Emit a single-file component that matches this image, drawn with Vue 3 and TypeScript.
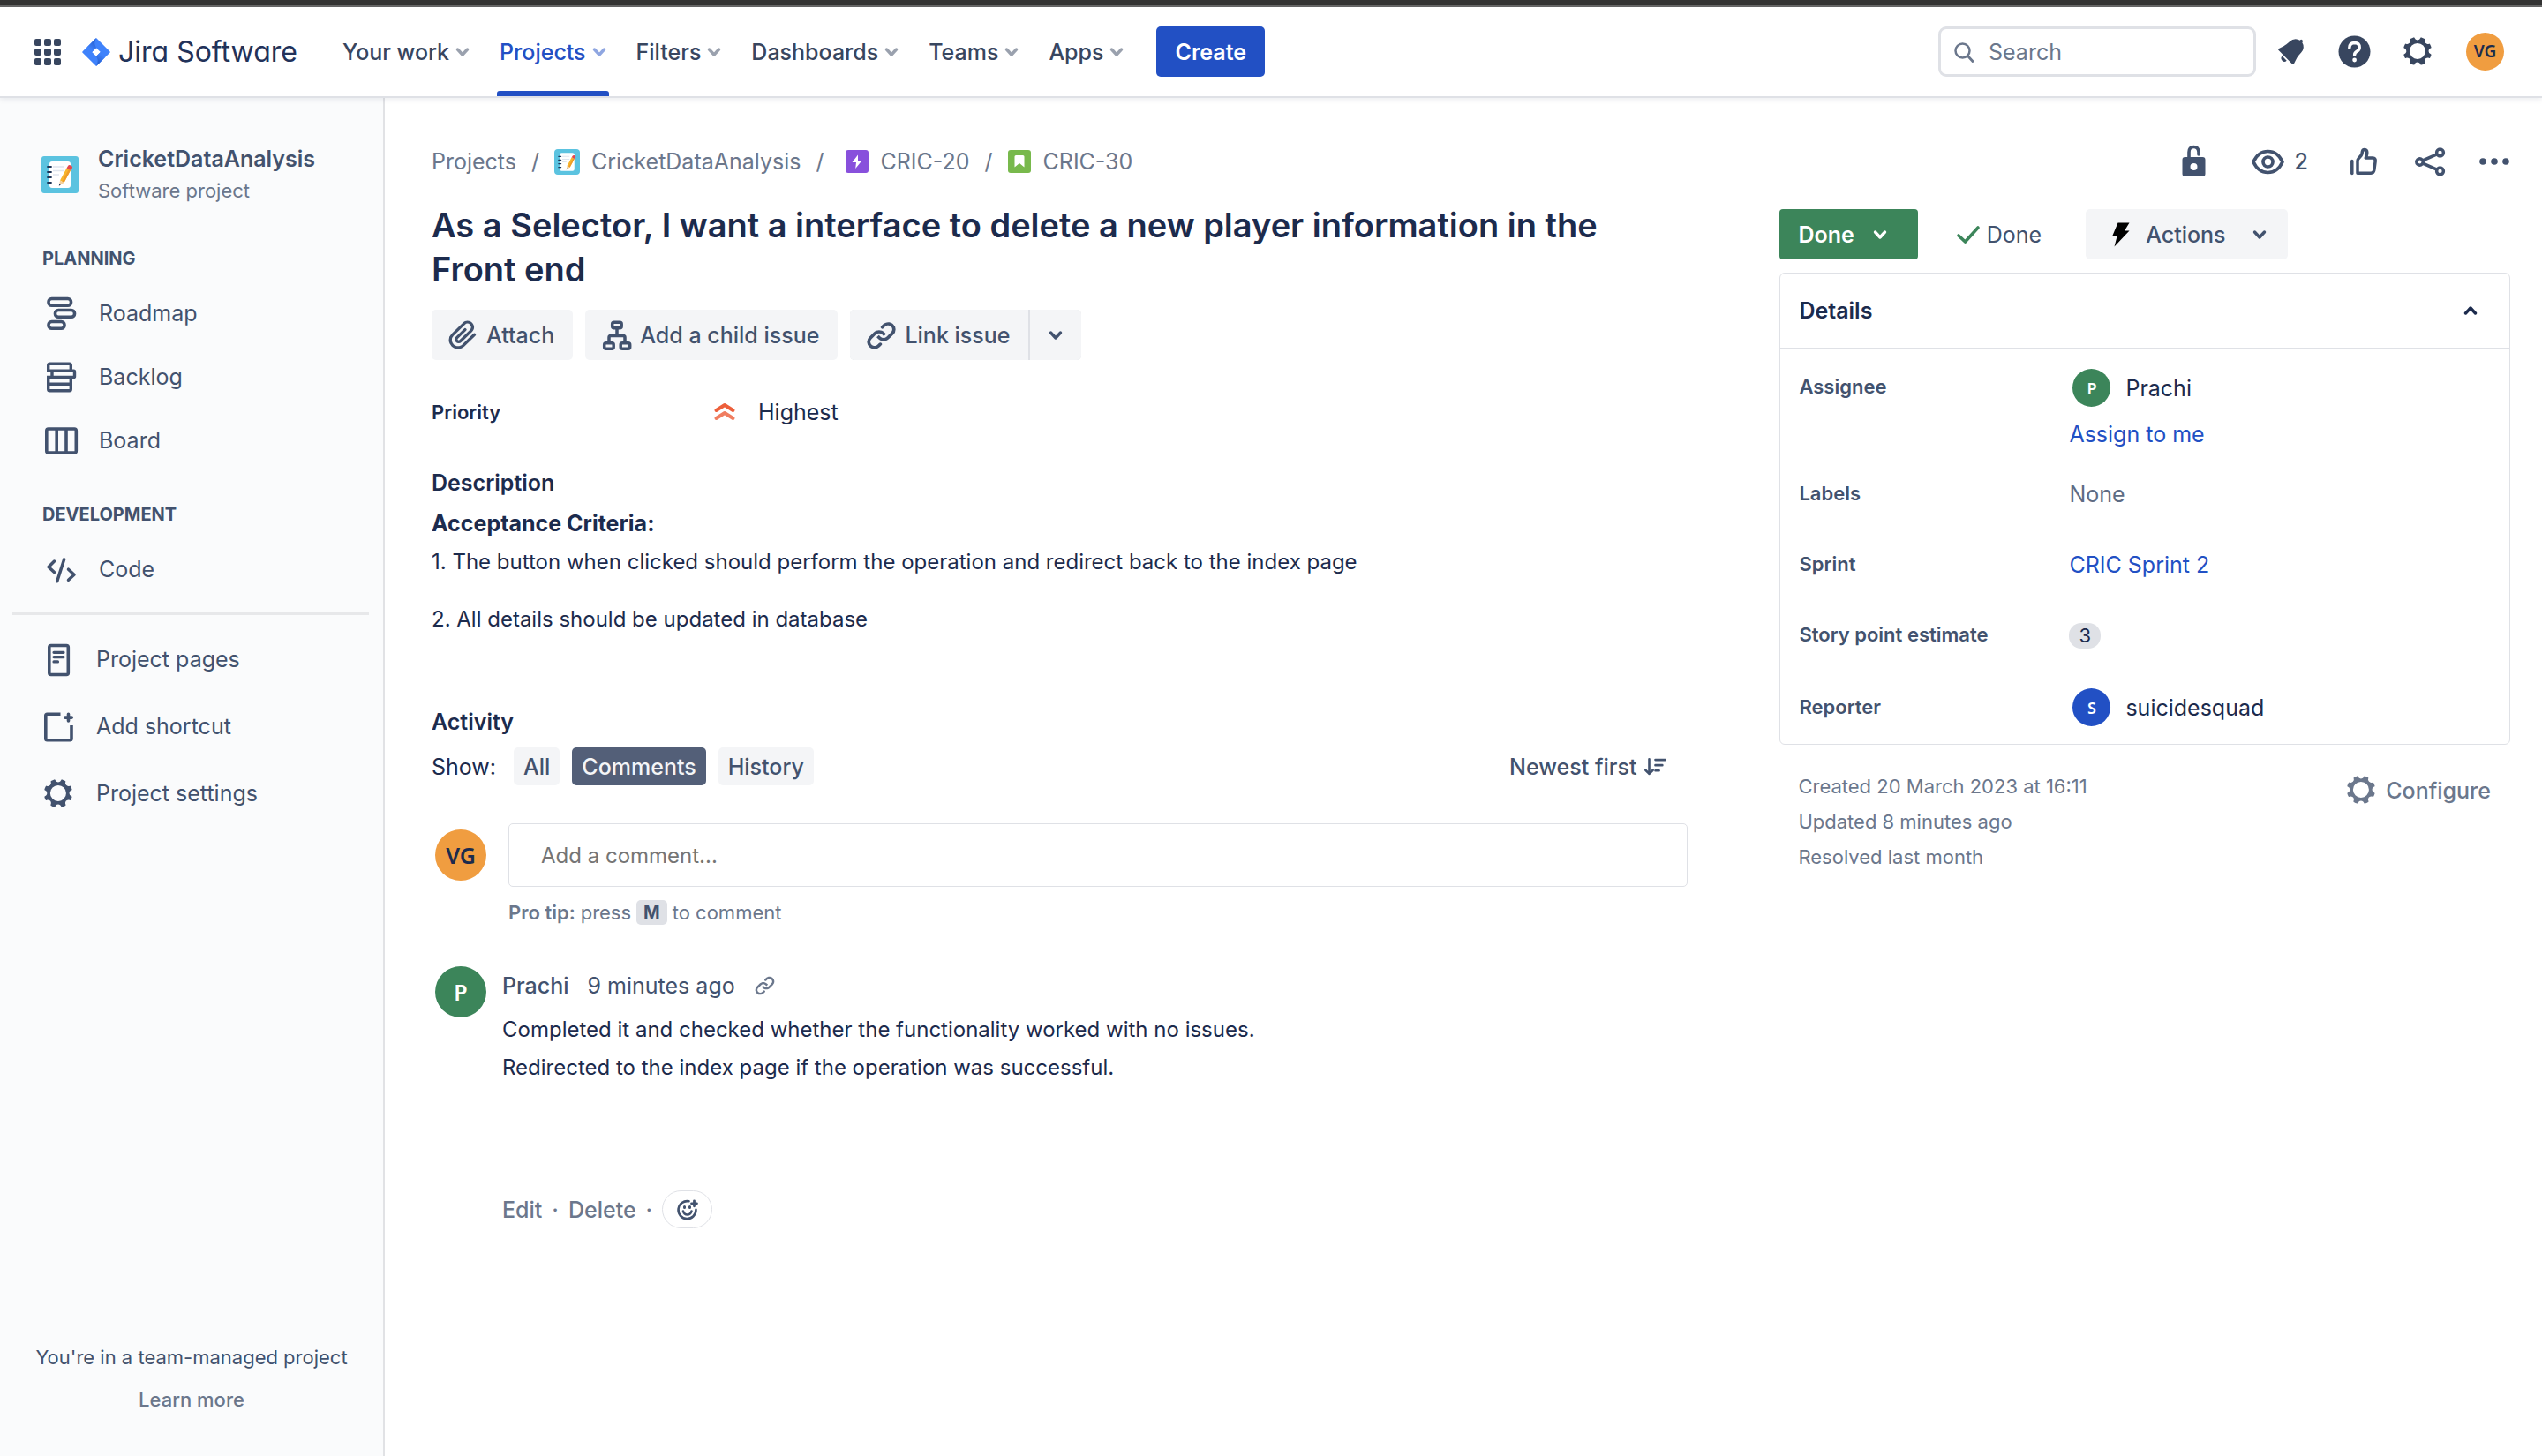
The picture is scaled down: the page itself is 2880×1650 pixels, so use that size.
<script setup lang="ts">
import { ref } from 'vue'

interface NavItem {
  label: string
  active?: boolean
}

const navItems: NavItem[] = [
  { label: 'Your work' },
  { label: 'Projects', active: true },
  { label: 'Filters' },
  { label: 'Dashboards' },
  { label: 'Teams' },
  { label: 'Apps' },
]

const planning = [
  { label: 'Roadmap', icon: 'i-roadmap' },
  { label: 'Backlog', icon: 'i-backlog' },
  { label: 'Board', icon: 'i-board' },
]

const shortcuts = [
  { label: 'Project pages', icon: 'i-pages' },
  { label: 'Add shortcut', icon: 'i-shortcut' },
  { label: 'Project settings', icon: 'i-gear' },
]

const filters = ['All', 'Comments', 'History']
const activeFilter = ref('Comments')

const search = ref('')
const comment = ref('')
</script>

<template>
  <div class="page">
    <!-- Shared icon shapes -->
    <svg class="sprite" aria-hidden="true">
      <symbol id="i-chevron" viewBox="0 0 16 16">
        <path d="M2.5 5 8 11l5.500-6" fill="none" stroke="currentColor" stroke-width="3.400" stroke-linecap="round" stroke-linejoin="round" />
      </symbol>
      <symbol id="i-gear" viewBox="0 0 24 24">
        <path fill="currentColor" fill-rule="evenodd" d="M11.701 16.7a5.002 5.002 0 110-10.003 5.002 5.002 0 010 10.004m8.368-3.117a1.995 1.995 0 01-1.346-1.885c0-.876.563-1.613 1.345-1.885a.48.48 0 00.315-.574 8.947 8.947 0 00-.836-1.993.477.477 0 00-.598-.195 2.04 2.04 0 01-1.29.08 1.988 1.988 0 01-1.404-1.395 2.04 2.04 0 01.076-1.297.478.478 0 00-.196-.597 8.98 8.98 0 00-1.975-.826.479.479 0 00-.574.314 1.995 1.995 0 01-1.885 1.346 1.994 1.994 0 01-1.884-1.345.482.482 0 00-.575-.315c-.708.2-1.379.485-2.004.842a.47.47 0 00-.198.582A2.002 2.002 0 014.445 7.06a.478.478 0 00-.595.196 8.946 8.946 0 00-.833 1.994.48.48 0 00.308.572 1.995 1.995 0 011.323 1.877c0 .867-.552 1.599-1.324 1.877a.479.479 0 00-.308.57 8.99 8.99 0 00.723 1.79.477.477 0 00.624.194c.595-.273 1.343-.264 2.104.238.117.077.225.185.302.3.527.8.512 1.58.198 2.188a.473.473 0 00.168.628 8.946 8.946 0 002.11.897.474.474 0 00.57-.313 1.995 1.995 0 011.886-1.353c.878 0 1.618.567 1.887 1.353a.475.475 0 00.57.313 8.964 8.964 0 002.084-.883.473.473 0 00.167-.631c-.318-.608-.337-1.393.191-2.195.077-.116.185-.225.302-.302.772-.511 1.527-.513 2.125-.23a.477.477 0 00.628-.19 8.925 8.925 0 00.728-1.793.478.478 0 00-.314-.573" />
      </symbol>
      <symbol id="i-link" viewBox="0 0 24 24">
        <path fill="currentColor" d="M12.856 5.457l-.937.92a1.002 1.002 0 000 1.437 1.047 1.047 0 001.463 0l.984-.966c.967-.95 2.542-1.135 3.602-.288a2.54 2.54 0 01.203 3.81l-2.903 2.852a2.646 2.646 0 01-3.696 0l-1.11-1.09L9 13.57l1.108 1.089c1.822 1.788 4.802 1.788 6.622 0l2.905-2.852a4.558 4.558 0 00-.357-6.82c-1.893-1.517-4.695-1.226-6.422.47M11.144 19.543l.937-.92a1.002 1.002 0 000-1.437 1.047 1.047 0 00-1.462 0l-.985.966c-.967.95-2.542 1.135-3.602.288a2.54 2.54 0 01-.203-3.81l2.903-2.852a2.646 2.646 0 013.696 0l1.11 1.09L15 11.43l-1.108-1.089c-1.822-1.788-4.802-1.788-6.622 0l-2.905 2.852a4.558 4.558 0 00.357 6.82c1.893 1.517 4.695 1.226 6.422-.47" />
      </symbol>
      <symbol id="i-notepad" viewBox="0 0 42 42">
        <rect width="42" height="42" rx="3" fill="#5bc3e0" />
        <rect x="9" y="6" width="24" height="30" rx="3" fill="#fff" />
        <path d="M7 12h4M7 18h4M7 24h4M7 30h4" stroke="#1d3557" stroke-width="1.800" stroke-linecap="round" />
        <path d="M13 12h12M13 16.500h12M13 21h7" stroke="#dfe5ee" stroke-width="1.500" />
        <path d="M28.500 13.500 33 16l-7.500 14-4.500-2.500z" fill="#f7b52c" />
        <path d="M31 14.700 33 16l-7.500 14-2-1.200z" fill="#ef9b28" />
        <path d="m21 27.500 4.500 2.500-5.500 3.500z" fill="#f4cf9b" />
        <path d="m20.300 31 1.400 1.400-1.900 1.300z" fill="#1d3557" />
        <path d="m28.500 13.500 1.700-2.700q1-1.300 2.500-.500l1.500.900q1.400 1 .700 2.300L33 16z" fill="#e5484d" />
      </symbol>
      <symbol id="i-roadmap" viewBox="0 0 43 43">
        <g fill="none" stroke="currentColor" stroke-width="3.600">
          <rect x="7" y="4.500" width="25.500" height="7.800" rx="3.600" />
          <rect x="14.500" y="17.500" width="22" height="7.800" rx="3.600" />
          <rect x="7" y="30.500" width="18" height="7.800" rx="3.600" />
        </g>
      </symbol>
      <symbol id="i-backlog" viewBox="0 0 43 43">
        <g fill="none" stroke="currentColor" stroke-width="3.400" stroke-linejoin="round">
          <path d="M6.700 15V8q0-1.800 1.800-1.800h22q1.800 0 1.800 1.800v6" />
          <path d="M5 14.300h30.500q1 0 1 1v5.200q0 1-1 1H5M11 14v7" />
          <path d="M6.700 21v14q0 1.800 1.800 1.800h22q1.800 0 1.800-1.800V21M6.700 29.200h25.500" />
        </g>
      </symbol>
      <symbol id="i-board" viewBox="0 0 43 43">
        <g fill="none" stroke="currentColor" stroke-width="3.600">
          <rect x="4.800" y="8" width="33.500" height="27" rx="2" />
          <path d="M16.200 8v27M27 8v27" />
        </g>
      </symbol>
      <symbol id="i-code" viewBox="0 0 43 43">
        <path d="m13.500 12-6.500 6.500 6.500 6M29.500 21.200l6.500 6-6.500 6M24.700 9.800l-8 25" fill="none" stroke="currentColor" stroke-width="3.500" stroke-linecap="round" stroke-linejoin="round" />
      </symbol>
      <symbol id="i-pages" viewBox="0 0 43 43">
        <rect x="10.800" y="5.500" width="21.500" height="33" rx="2" fill="none" stroke="currentColor" stroke-width="3.600" />
        <path d="M16 13.300h11M16 18.600h11M16 23.900h4.500" stroke="currentColor" stroke-width="3.200" stroke-linecap="round" />
      </symbol>
      <symbol id="i-shortcut" viewBox="0 0 43 43">
        <path d="M23.500 7.300H8.500q-1.700 0-1.700 1.700v26q0 1.700 1.700 1.700h25.800q1.700 0 1.700-1.700V20" fill="none" stroke="currentColor" stroke-width="3.600" />
        <path d="M32.500 7.300v7.600M28.700 11.100h7.600" stroke="currentColor" stroke-width="3.600" stroke-linecap="round" />
      </symbol>
    </svg>

    <div class="window-edge"></div>

    <header class="topbar">
      <button class="switcher" type="button" aria-label="App switcher">
        <svg viewBox="0 0 30 30" width="30" height="30" fill="currentColor">
          <rect x="0" y="0" width="8" height="8" rx="2" /><rect x="11" y="0" width="8" height="8" rx="2" /><rect x="22" y="0" width="8" height="8" rx="2" />
          <rect x="0" y="11" width="8" height="8" rx="2" /><rect x="11" y="11" width="8" height="8" rx="2" /><rect x="22" y="11" width="8" height="8" rx="2" />
          <rect x="0" y="22" width="8" height="8" rx="2" /><rect x="11" y="22" width="8" height="8" rx="2" /><rect x="22" y="22" width="8" height="8" rx="2" />
        </svg>
      </button>
      <a class="brand" href="#">
        <svg viewBox="0 0 32 32" width="32" height="32">
          <defs>
            <linearGradient id="jg1" x1="16" y1="3" x2="9" y2="12" gradientUnits="userSpaceOnUse"><stop offset="0" stop-color="#2259c9" /><stop offset="1" stop-color="#3f82fb" /></linearGradient>
            <linearGradient id="jg2" x1="16" y1="29" x2="23" y2="20" gradientUnits="userSpaceOnUse"><stop offset="0" stop-color="#2259c9" /><stop offset="1" stop-color="#3f82fb" /></linearGradient>
          </defs>
          <path fill="#3f82fb" fill-rule="evenodd" d="M16 0 31.400 15.200q.8.800 0 1.600L16 32 .6 16.800q-.8-.8 0-1.600zm0 11.200L11.200 16l4.800 4.800 4.800-4.800z" />
          <path fill="url(#jg1)" d="M16 0v0q-3.500 5.500 0 11.200L11.200 16 6 10z" />
          <path fill="url(#jg2)" d="M16 32q3.500-5.500 0-11.200l4.800-4.800 5.200 6z" />
        </svg>
        <span>Jira Software</span>
      </a>

      <nav class="nav">
        <button v-for="item in navItems" :key="item.label" type="button" class="nav-item" :class="{ active: item.active }">
          {{ item.label }}
          <svg class="chev"><use href="#i-chevron" /></svg>
        </button>
      </nav>
      <button class="create" type="button">Create</button>

      <div class="tools">
        <label class="search">
          <svg viewBox="0 0 24 24" width="24" height="24"><circle cx="10.500" cy="10.500" r="8" fill="none" stroke="currentColor" stroke-width="2.500" /><path d="m16.500 16.500 5.500 6" stroke="currentColor" stroke-width="2.800" stroke-linecap="round" /></svg>
          <input v-model="search" type="text" placeholder="Search" aria-label="Search" />
        </label>
        <button class="icon-btn" type="button" aria-label="Notifications">
          <svg viewBox="0 0 24 24" width="43" height="43"><path fill="currentColor" d="M6.485 17.669a2 2 0 002.829 0l-2.829-2.83a2 2 0 000 2.83zm4.897-12.191l-.725.725c-.782.782-2.21 1.813-3.206 2.311l-3.017 1.509c-.495.248-.584.774-.187 1.171l8.556 8.556c.398.396.922.313 1.171-.188l1.51-3.016c.494-.988 1.526-2.42 2.311-3.206l.725-.726a5.048 5.048 0 00.64-6.356 1.01 1.01 0 10-1.354-1.494c-.023.025-.046.049-.066.075a5.043 5.043 0 00-2.788-.84 5.036 5.036 0 00-3.57 1.478z" /></svg>
        </button>
        <button class="icon-btn" type="button" aria-label="Help">
          <svg viewBox="0 0 43 43" width="43" height="43"><circle cx="21.500" cy="21.500" r="18" fill="currentColor" /><path d="M15.800 17.200q.2-5.700 5.900-5.700 5.500.2 5.500 5.200 0 2.700-2.700 4.400-2.900 1.700-2.900 4.200" fill="none" stroke="#fff" stroke-width="3.500" stroke-linecap="round" /><circle cx="21.600" cy="31" r="2.400" fill="#fff" /></svg>
        </button>
        <button class="icon-btn" type="button" aria-label="Settings">
          <svg width="43" height="43"><use href="#i-gear" /></svg>
        </button>
        <button class="avatar orange top-avatar" type="button" aria-label="Your profile">VG</button>
      </div>
    </header>

    <div class="body">
      <aside class="sidebar">
        <div class="project">
          <svg width="42" height="42"><use href="#i-notepad" /></svg>
          <div>
            <div class="project-name">CricketDataAnalysis</div>
            <div class="project-type">Software project</div>
          </div>
        </div>
        <h2 class="group">PLANNING</h2>
        <a v-for="item in planning" :key="item.label" class="side-link" href="#">
          <svg width="43" height="43"><use :href="'#' + item.icon" /></svg>{{ item.label }}
        </a>
        <h2 class="group second">DEVELOPMENT</h2>
        <a class="side-link" href="#"><svg width="43" height="43"><use href="#i-code" /></svg>Code</a>
        <hr class="divider" />
        <a v-for="item in shortcuts" :key="item.label" class="side-link low" href="#">
          <svg width="43" height="43"><use :href="'#' + item.icon" /></svg>{{ item.label }}
        </a>
        <div class="side-foot">
          <p>You're in a team-managed project</p>
          <a href="#">Learn more</a>
        </div>
      </aside>

      <main class="content">
        <section class="issue">
          <nav class="crumbs" aria-label="Breadcrumb">
            <a href="#">Projects</a>
            <span class="slash">/</span>
            <a href="#"><svg class="crumb-project" width="29" height="29"><use href="#i-notepad" /></svg>CricketDataAnalysis</a>
            <span class="slash wide">/</span>
            <a class="typed" href="#">
              <svg viewBox="0 0 26 26" width="26" height="26"><rect width="26" height="26" rx="3" fill="#8850dc" /><path d="M14 5.500 7.500 14H12l-.800 7L18.500 12H14z" fill="#fff" /></svg>CRIC-20</a>
            <span class="slash">/</span>
            <a class="typed last" href="#">
              <svg viewBox="0 0 26 26" width="26" height="26"><rect width="26" height="26" rx="3" fill="#78b94c" /><path d="M7.500 19.500V7.500Q7.500 6 9 6h8q1.500 0 1.500 1.500v12L13 15z" fill="#fff" /></svg>CRIC-30</a>
          </nav>

          <h1 class="title">As a Selector, I want a interface to delete a new player information in the Front end</h1>

          <div class="quick">
            <button class="btn" type="button">
              <svg viewBox="0 0 24 24" width="43" height="43"><path fill="currentColor" d="M11.643 17.965c-1.53 1.495-4.016 1.496-5.542.004a3.773 3.773 0 01.002-5.412l7.147-6.985a2.316 2.316 0 013.233-.003c.893.873.895 2.282.004 3.154l-6.703 6.55a.653.653 0 01-.914-.008.62.62 0 01.001-.892l5.14-5.024a.9.9 0 000-1.294.952.952 0 00-1.325 0l-5.139 5.022a2.414 2.414 0 000 3.486 2.545 2.545 0 003.565.002l6.702-6.55c1.631-1.594 1.629-4.148-.004-5.744-1.632-1.596-4.255-1.594-5.883.003l-7.148 6.985a5.567 5.567 0 00-.002 7.996c2.258 2.207 5.928 2.206 8.192-.005l6.917-6.76a.9.9 0 000-1.294.953.953 0 00-1.325 0z" /></svg>
              Attach
            </button>
            <button class="btn" type="button">
              <svg viewBox="-2 -2 43 43" width="43" height="43" fill="none" stroke="currentColor" stroke-width="3.500"><rect x="14.700" y="5.200" width="10.500" height="6.500" rx="2" /><rect x="5.700" y="28.700" width="10.500" height="6.500" rx="2" /><rect x="24.200" y="28.700" width="10.500" height="6.500" rx="2" /><path d="M20 12v8.500M11 29v-6.500q0-2 2-2h14q2 0 2 2V29" /></svg>
              Add a child issue
            </button>
            <div class="split">
              <button class="btn" type="button"><svg width="43" height="43"><use href="#i-link" /></svg>Link issue</button>
              <button class="btn more" type="button" aria-label="More link options"><svg class="chev"><use href="#i-chevron" /></svg></button>
            </div>
          </div>

          <div class="priority">
            <span class="priority-label">Priority</span>
            <svg viewBox="0 0 26 26" width="26" height="26" fill="none" stroke-width="4" stroke-linecap="round" stroke-linejoin="round"><path d="m3.500 11 9.500-6 9.500 6" stroke="#ed5f3b" /><path d="m3.500 20 9.500-6 9.500 6" stroke="#f07d60" /></svg>
            <span>Highest</span>
          </div>

          <h2 class="heading">Description</h2>
          <div class="description">
            <p><strong>Acceptance Criteria:</strong></p>
            <p>1. The button when clicked should perform the operation and redirect back to the index page</p>
            <p class="spaced">2. All details should be updated in database</p>
          </div>

          <h2 class="heading activity">Activity</h2>
          <div class="activity-bar">
            <span>Show:</span>
            <div class="tabs">
              <button v-for="f in filters" :key="f" type="button" class="tab" :class="{ on: f === activeFilter }" @click="activeFilter = f">{{ f }}</button>
            </div>
            <button class="sort" type="button">
              Newest first
              <svg viewBox="0 0 28 28" width="26" height="26" fill="none" stroke="currentColor" stroke-width="2.800" stroke-linecap="round" stroke-linejoin="round"><path d="M7 4.500v18M2.500 18 7 22.500 11.500 18M14.500 5.500h12M14.500 12h8.500M14.500 18.500h4.500" /></svg>
            </button>
          </div>

          <div class="composer">
            <span class="avatar orange big">VG</span>
            <div class="composer-body">
              <input v-model="comment" type="text" placeholder="Add a comment..." aria-label="Add a comment" />
              <p class="tip"><b>Pro tip:</b><span>press</span><kbd>M</kbd><span>to comment</span></p>
            </div>
          </div>

          <article class="comment">
            <span class="avatar green big">P</span>
            <div>
              <div class="comment-head">
                <strong>Prachi</strong><span>9 minutes ago</span>
                <a href="#" aria-label="Copy link to comment"><svg width="29" height="29"><use href="#i-link" /></svg></a>
              </div>
              <div class="comment-text">
                <p>Completed it and checked whether the functionality worked with no issues.</p>
                <p>Redirected to the index page if the operation was successful.</p>
              </div>
              <div class="comment-actions">
                <button type="button">Edit</button><span>·</span><button type="button">Delete</button><span>·</span>
                <button class="react" type="button" aria-label="Add reaction">
                  <svg viewBox="0 0 26 26" width="26" height="26" fill="none" stroke="currentColor" stroke-width="2.600" stroke-linecap="round"><path d="M14.500 3.300a10 10 0 1 0 8 9.500" /><path d="M8 14.500q1 4 4.700 4t4.800-4" /><path d="M9.500 9.600v.800M15.500 9.600v.800" stroke-width="3" /><path d="M20.500 2.800v6M17.500 5.800h6" stroke-width="2.800" /></svg>
                </button>
              </div>
            </div>
          </article>
        </section>

        <aside class="meta">
          <div class="meta-tools">
            <button class="icon-btn" type="button" aria-label="Restrictions">
              <svg viewBox="0 0 43 43" width="43" height="43"><path d="M16 17V10.500q0-6 5.500-6 5 0 5.500 5.500v3" fill="none" stroke="currentColor" stroke-width="3.600" stroke-linecap="round" /><path fill="currentColor" fill-rule="evenodd" d="M11.500 16h20q3 0 3 3v16q0 3-3 3h-20q-3 0-3-3V19q0-3 3-3zm10 7a4 4 0 1 0 0 8 4 4 0 0 0 0-8z" /></svg>
            </button>
            <button class="icon-btn watch" type="button" aria-label="Watchers">
              <svg viewBox="0 0 43 43" width="43" height="43" fill="none" stroke="currentColor" stroke-width="3.700"><path d="M5 21.500q5.500-12 16.500-12T38 21.500q-5.500 12-16.500 12T5 21.500z" stroke-linejoin="round" /><circle cx="21.500" cy="21.500" r="5.500" /></svg>
              2
            </button>
            <button class="icon-btn" type="button" aria-label="Vote">
              <svg viewBox="0 0 43 43" width="43" height="43" fill="none" stroke="currentColor" stroke-width="3.500" stroke-linecap="round" stroke-linejoin="round"><path d="M8.800 20.500v14" /><path d="M15 34V20.500q0-1.500 1-2.700l3.200-3.800q.6-.8.800-2l.500-2.600q.5-2 2.500-2 2.800.2 2.800 3.500 0 2.500-1.500 6.100h8q3 .3 2.900 3.200L33.800 31q-.7 3.200-3.600 3.200H15" /></svg>
            </button>
            <button class="icon-btn" type="button" aria-label="Share">
              <svg viewBox="0 0 43 43" width="43" height="43" fill="none" stroke="currentColor" stroke-width="3.500"><circle cx="9.500" cy="21.500" r="3.700" /><circle cx="32.500" cy="11" r="3.900" /><circle cx="32.500" cy="32" r="3.900" /><path d="m13 19.800 15.900-7M13 23.200l15.900 7" /></svg>
            </button>
            <button class="icon-btn" type="button" aria-label="More">
              <svg viewBox="0 0 36 36" width="36" height="36" fill="currentColor"><circle cx="5" cy="18" r="3.800" /><circle cx="18" cy="18" r="3.800" /><circle cx="31" cy="18" r="3.800" /></svg>
            </button>
          </div>

          <div class="status-row">
            <button class="status" type="button">Done<svg class="chev"><use href="#i-chevron" /></svg></button>
            <span class="resolution">
              <svg viewBox="0 0 28 22" width="28" height="22"><path d="m3 12 7.500 7L25 3" fill="none" stroke="#3c855a" stroke-width="3.600" stroke-linecap="round" stroke-linejoin="round" /></svg>Done
            </span>
            <button class="btn automate" type="button">
              <svg viewBox="0 0 22 28" width="22" height="28"><path d="M7.500.5H20.500L15 9.500h5.500L3.500 27.500 6.500 16H1z" fill="#000" /></svg>
              Actions
              <svg class="chev"><use href="#i-chevron" /></svg>
            </button>
          </div>

          <section class="panel">
            <h2 class="panel-head">
              <span>Details</span>
              <button type="button" class="icon-btn" aria-label="Collapse details"><svg class="chev up"><use href="#i-chevron" /></svg></button>
            </h2>
            <dl>
              <div class="field assignee">
                <dt>Assignee</dt>
                <dd>
                  <div class="person"><span class="avatar green small">P</span>Prachi</div>
                  <a href="#">Assign to me</a>
                </dd>
              </div>
              <div class="field"><dt>Labels</dt><dd class="muted">None</dd></div>
              <div class="field"><dt>Sprint</dt><dd><a href="#">CRIC Sprint 2</a></dd></div>
              <div class="field"><dt>Story point estimate</dt><dd><span class="badge">3</span></dd></div>
              <div class="field"><dt>Reporter</dt><dd><div class="person"><span class="avatar blue small">S</span>suicidesquad</div></dd></div>
            </dl>
          </section>

          <div class="dates">
            <div>
              <p>Created 20 March 2023 at 16:11</p>
              <p>Updated 8 minutes ago</p>
              <p>Resolved last month</p>
            </div>
            <button class="configure" type="button"><svg width="43" height="43"><use href="#i-gear" /></svg>Configure</button>
          </div>
        </aside>
      </main>
    </div>
  </div>
</template>

<style>
body {
  margin: 0;
  background: #fff;
}
</style>

<style scoped>
.page {
  display: flex;
  flex-direction: column;
  min-height: 100vh;
  color: #1c2b4d;
  font-family: Inter, "Liberation Sans", sans-serif;
  font-size: 25px;
  line-height: 36px;
}
.page * {
  box-sizing: border-box;
}
h1, h2, p, dl, dd {
  margin: 0;
}
button, input {
  padding: 0;
  border: 0;
  background: none;
  color: inherit;
  font: inherit;
}
button {
  cursor: pointer;
}
a {
  color: inherit;
  text-decoration: none;
}
svg {
  display: block;
  flex: none;
}
.sprite {
  position: absolute;
  width: 0;
  height: 0;
}
.chev {
  width: 16px;
  height: 16px;
}
.up {
  rotate: 180deg;
}

.window-edge {
  height: 8px;
  background: #333;
  border-bottom: 2px solid #666;
}

/* Top bar */
.topbar {
  position: relative;
  display: flex;
  align-items: center;
  height: 103px;
  padding: 0 43px 0 39px;
  border-bottom: 2px solid #dfe1e6;
  box-shadow: 0 2px 6px rgba(9, 30, 66, 0.08);
  color: #38465f;
}
.brand {
  display: flex;
  align-items: center;
  gap: 9px;
  margin-left: 24px;
  color: #22325a;
  font-size: 32px;
  font-feature-settings: "cv11";
}
.nav {
  display: flex;
  align-self: stretch;
  gap: 28px;
  margin-left: 48px;
}
.nav-item {
  position: relative;
  display: flex;
  align-items: center;
  gap: 7px;
  padding: 0 3px;
  font-weight: 500;
}
.nav-item .chev {
  opacity: 0.5;
}
.nav-item.active {
  color: #2250c4;
}
.nav-item.active::after {
  content: "";
  position: absolute;
  right: 0;
  bottom: 0;
  left: 0;
  height: 6px;
  border-radius: 3px 3px 0 0;
  background: #2250c4;
}
.create {
  height: 57px;
  margin-left: 34px;
  padding: 0 21px;
  border-radius: 5px;
  background: #2250c4;
  color: #fff;
  font-weight: 600;
}
.tools {
  display: flex;
  align-items: center;
  gap: 29px;
  margin-left: auto;
}
.search {
  display: flex;
  align-items: center;
  gap: 16px;
  width: 360px;
  height: 57px;
  margin-right: -11px;
  padding: 0 14px;
  border: 3px solid #dfe1e6;
  border-radius: 9px;
  color: #6b778c;
}
.search input {
  width: 100%;
  min-width: 0;
  outline: 0;
}
.search input::placeholder {
  color: #6b778c;
  opacity: 1;
}
.icon-btn {
  display: flex;
  align-items: center;
}
.avatar {
  display: flex;
  flex: none;
  align-items: center;
  justify-content: center;
  width: 43px;
  height: 43px;
  border-radius: 50%;
  color: #fff;
  font-family: "Noto Sans", sans-serif;
  font-size: 19px;
  font-weight: 600;
  line-height: 1;
}
.orange {
  background: #f09d40;
  color: #1c2b4d;
}
.green {
  background: #3c855a;
}
.blue {
  background: #2250c4;
}
.big {
  width: 58px;
  height: 58px;
  font-size: 25px;
}
.top-avatar {
  margin-left: 4px;
}

/* Sidebar */
.body {
  display: flex;
  flex: 1;
}
.sidebar {
  display: flex;
  flex: none;
  flex-direction: column;
  width: 436px;
  padding: 51px 0 40px;
  border-right: 2px solid #e1e2e5;
  background: #fafbfc;
  color: #42526e;
}
.project {
  display: flex;
  align-items: center;
  gap: 22px;
  padding-left: 47px;
}
.project-name {
  font-weight: 600;
}
.project-type {
  color: #6b778c;
  font-size: 22px;
}
.group {
  margin: 41px 0 8px;
  padding-left: 48px;
  font-size: 20px;
  font-weight: 700;
}
.group.second {
  margin-top: 30px;
}
.side-link {
  display: flex;
  align-items: center;
  gap: 21px;
  height: 72px;
  padding-left: 48px;
}
.side-link.low {
  height: 76px;
  padding-left: 45px;
}
.divider {
  width: 404px;
  height: 3px;
  margin: 13px 0 12px 14px;
  border: 0;
  background: #e7e8ea;
}
.side-foot {
  margin-top: auto;
  font-size: 22px;
  line-height: 48px;
  text-align: center;
}
.side-foot a {
  color: #6b778c;
  font-weight: 500;
}

/* Issue */
.content {
  display: grid;
  flex: 1;
  grid-template-columns: minmax(0, 43fr) minmax(0, 25fr);
  gap: 104px;
  align-items: start;
  padding: 52px 36px 38px 53px;
}
.crumbs {
  display: flex;
  align-items: center;
  height: 40px;
  color: #6b778c;
}
.crumbs a {
  display: flex;
  align-items: center;
  gap: 13px;
}
.crumb-project {
  border-radius: 4px;
}
.slash {
  margin: 0 17px;
}
.slash.wide {
  margin-right: 24px;
}
.crumbs .typed {
  gap: 14px;
}
.title {
  margin-top: 27px;
  font-size: 38px;
  font-weight: 600;
  line-height: 50px;
}
.quick {
  display: flex;
  gap: 14px;
  margin-top: 21px;
}
.btn {
  display: flex;
  align-items: center;
  gap: 5px;
  height: 57px;
  padding: 0 21px 0 14px;
  border-radius: 5px;
  background: #f4f5f7;
  color: #42526e;
  font-weight: 500;
}
.split {
  display: flex;
  gap: 2px;
  border-radius: 5px;
  background: #dfe1e6;
}
.split .btn:first-child {
  border-radius: 5px 0 0 5px;
}
.split .more {
  padding: 0 21px;
  border-radius: 0 5px 5px 0;
}
.priority {
  display: flex;
  align-items: center;
  margin-top: 41px;
}
.priority-label {
  width: 319px;
  font-size: 22px;
  font-weight: 600;
}
.priority svg {
  margin-right: 25px;
}
.heading {
  margin-top: 44px;
  font-size: 25px;
  font-weight: 600;
}
.description {
  margin-top: 7px;
  font-size: 24px;
  line-height: 43px;
}
.description strong {
  font-size: 25px;
  font-weight: 700;
}
.description .spaced {
  margin-top: 22px;
}
.activity {
  margin-top: 77px;
}
.activity-bar {
  display: flex;
  align-items: center;
  gap: 20px;
  height: 43px;
  margin-top: 11px;
}
.tabs {
  display: flex;
  gap: 14px;
}
.tab {
  height: 43px;
  padding: 0 11px;
  border-radius: 5px;
  background: #f4f5f7;
  color: #42526e;
  font-weight: 500;
}
.tab.on {
  background: #535f78;
  color: #f4f5f7;
}
.sort {
  display: flex;
  align-items: center;
  gap: 8px;
  margin-right: 24px;
  margin-left: auto;
  color: #42526e;
  font-weight: 500;
}
.composer {
  display: flex;
  gap: 25px;
  margin-top: 43px;
  padding-left: 4px;
}
.composer .avatar {
  margin-top: 7px;
}
.composer-body {
  flex: 1;
}
.composer-body input {
  display: block;
  width: 100%;
  height: 72px;
  padding: 0 36px;
  border: 1px solid #dfe1e6;
  border-radius: 5px;
  font-size: 24px;
  outline: 0;
}
.composer-body input::placeholder {
  color: #757575;
  opacity: 1;
}
.tip {
  display: flex;
  align-items: center;
  gap: 6px;
  margin-top: 15px;
  color: #6b778c;
  font-size: 22px;
  line-height: 28px;
}
.tip b {
  font-weight: 600;
}
kbd {
  padding: 0 8px;
  border-radius: 5px;
  background: #dfe1e6;
  color: #42526e;
  font-family: inherit;
  font-size: 20px;
  font-weight: 700;
}
.comment {
  display: flex;
  gap: 18px;
  margin-top: 47px;
  padding-left: 4px;
}
.comment-head {
  display: flex;
  align-items: center;
  height: 43px;
  color: #42526e;
}
.comment-head strong {
  margin-right: 21px;
  font-weight: 500;
}
.comment-head a {
  margin-left: 19px;
  color: #6b778c;
}
.comment-text {
  margin-top: 7px;
  font-size: 24px;
  line-height: 43px;
}
.comment-actions {
  display: flex;
  align-items: center;
  gap: 11px;
  margin-top: 118px;
  color: #6b778c;
  font-weight: 500;
}
.react {
  display: flex;
  align-items: center;
  justify-content: center;
  width: 57px;
  height: 43px;
  border: 1px solid #dfe1e6;
  border-radius: 22px;
  color: #42526e;
}

/* Right column */
.meta-tools {
  display: flex;
  align-items: center;
  justify-content: flex-end;
  gap: 33px;
  height: 40px;
  color: #42526e;
}
.watch {
  gap: 9px;
  padding: 0 8px;
  font-weight: 500;
}
.status-row {
  display: flex;
  align-items: center;
  margin-top: 34px;
}
.status {
  display: flex;
  align-items: center;
  gap: 21px;
  height: 57px;
  padding: 0 35px 0 21px;
  border-radius: 4px;
  background: #3c855a;
  color: #fff;
  font-weight: 600;
}
.resolution {
  display: flex;
  align-items: center;
  gap: 7px;
  margin: 0 50px 0 43px;
  color: #42526e;
}
.automate {
  gap: 17px;
  padding: 0 24px 0 29px;
}
.automate .chev {
  margin-left: 13px;
}
.panel {
  margin-top: 15px;
  border: 1px solid #dfe1e6;
  border-radius: 6px;
}
.panel-head {
  display: flex;
  align-items: center;
  justify-content: space-between;
  height: 85px;
  padding: 0 36px 0 21px;
  border-bottom: 1px solid #dfe1e6;
  font-size: 25px;
  font-weight: 600;
}
.field {
  display: flex;
  align-items: center;
  height: 80px;
  padding-left: 21px;
}
.field:last-child {
  height: 83px;
}
.assignee {
  align-items: flex-start;
  height: 125px;
  padding-top: 23px;
}
.field dt {
  width: 306px;
  padding-bottom: 2px;
  color: #42526e;
  font-size: 22px;
  font-weight: 600;
}
.assignee dt {
  padding-top: 2px;
}
.field a {
  color: #2250c4;
}
.assignee a {
  display: inline-block;
  margin-top: 13px;
}
.person {
  display: flex;
  align-items: center;
  gap: 17px;
  padding-left: 4px;
}
.small {
  font-size: 18px;
}
.muted {
  color: #5e6c84;
}
.badge {
  display: block;
  padding: 0 11px;
  border-radius: 14px;
  background: #dfe1e6;
  font-size: 22px;
  line-height: 29px;
}
.dates {
  display: flex;
  align-items: flex-start;
  justify-content: space-between;
  margin-top: 27px;
  padding: 0 22px 0 21px;
  color: #6b778c;
  font-size: 22px;
  line-height: 40px;
}
.configure {
  display: flex;
  align-items: center;
  gap: 6px;
  margin-top: 3px;
  font-size: 25px;
  font-weight: 500;
}
</style>
